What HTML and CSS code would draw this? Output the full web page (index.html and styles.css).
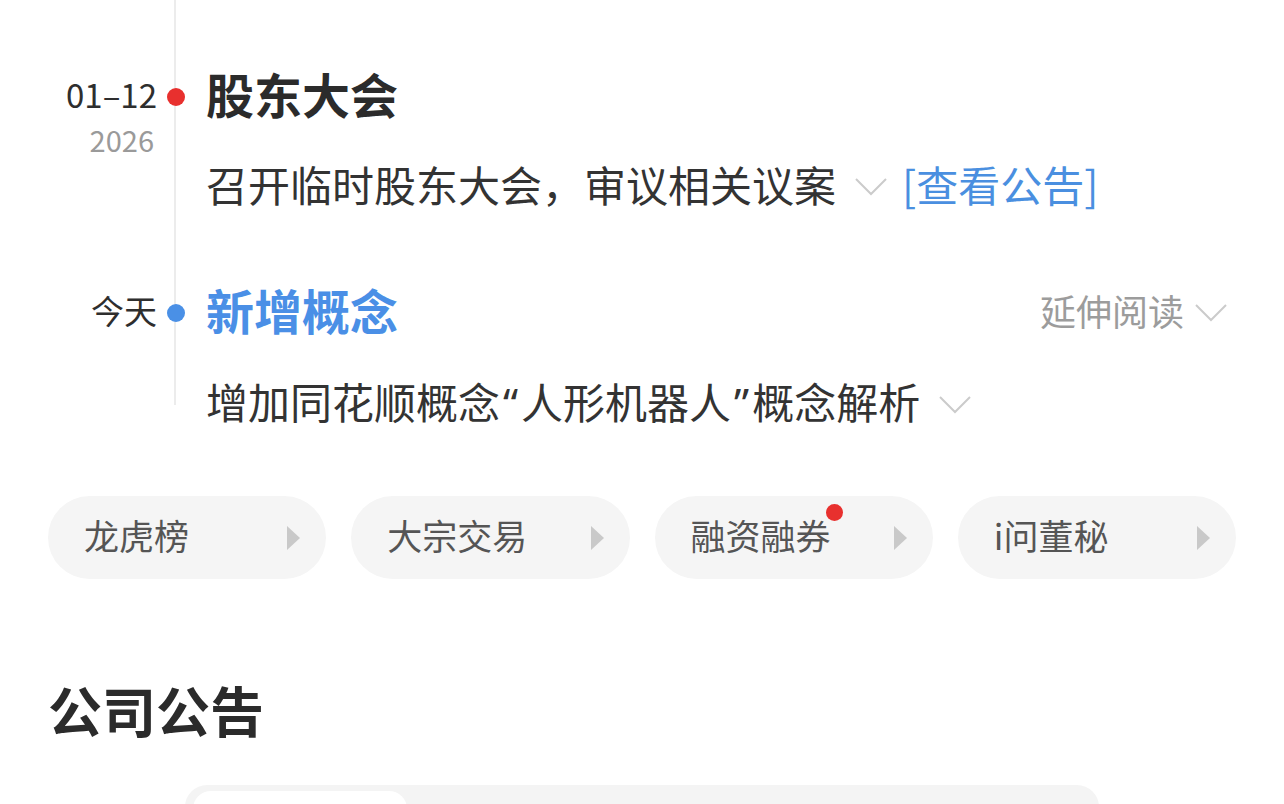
FILE: index.html
```html
<!DOCTYPE html>
<html lang="zh-CN">
<head>
<meta charset="utf-8">
<link rel="stylesheet" href="styles.css">
</head>
<body>
<div class="page">
  <section class="timeline">
    <div class="item">
      <div class="date">
        <span class="md">01–12</span>
        <span class="yr">2026</span>
      </div>
      <div class="axis"><span class="dot dot-red"></span></div>
      <div class="head"><h2 class="title">股东大会</h2></div>
      <div class="body">
        <span class="text">召开临时股东大会，审议相关议案</span>
        <svg class="chev" width="32" height="18" viewBox="0 0 32 18"><polyline points="1,1 16,16 31,1" fill="none" stroke="#cbcbcb" stroke-width="2"/></svg>
        <a class="link">[查看公告]</a>
      </div>
    </div>
    <div class="item">
      <div class="date"><span class="md">今天</span></div>
      <div class="axis"><span class="dot dot-blue"></span></div>
      <div class="head">
        <h2 class="title blue">新增概念</h2>
        <span class="more"><span class="more-text">延伸阅读</span>
          <svg class="chev" width="32" height="18" viewBox="0 0 32 18"><polyline points="1,1 16,16 31,1" fill="none" stroke="#cbcbcb" stroke-width="2"/></svg>
        </span>
      </div>
      <div class="body">
        <span class="text">增加同花顺概念<span class="q">“</span>人形机器人<span class="q">”</span>概念解析</span>
        <svg class="chev" width="32" height="18" viewBox="0 0 32 18"><polyline points="1,1 16,16 31,1" fill="none" stroke="#cbcbcb" stroke-width="2"/></svg>
      </div>
    </div>
  </section>

  <nav class="pills">
    <a class="pill"><span class="label">龙虎榜</span><span class="tri"></span></a>
    <a class="pill"><span class="label">大宗交易</span><span class="tri"></span></a>
    <a class="pill"><span class="label badge-host">融资融券<span class="badge"></span></span><span class="tri"></span></a>
    <a class="pill"><span class="label">i问董秘</span><span class="tri"></span></a>
  </nav>

  <h1 class="section-title">公司公告</h1>

  <div class="segments">
    <div class="seg active"></div>
    <div class="seg"></div>
    <div class="seg"></div>
    <div class="seg"></div>
  </div>
</div>
</body>
</html>
```

FILE: styles.css
```css
* { box-sizing: border-box; margin: 0; padding: 0; }
html, body {
  background: #ffffff;
  font-family: "Noto Sans CJK SC", "Noto Sans", sans-serif;
  color: #333333;
  overflow: hidden;
}
body { width: 1284px; height: 804px; }

.timeline {
  position: relative;
  padding-top: 65px;
}
.timeline::before {
  content: "";
  position: absolute;
  left: 174px;
  top: 0;
  bottom: 30px;
  width: 2px;
  background: #ececec;
}

.item {
  display: grid;
  grid-template-columns: 160px 30px 1fr;
  grid-template-rows: 64px 60px;
  row-gap: 28px;
  padding-right: 57px;
  padding-bottom: 64px;
}
.item:last-child { padding-bottom: 0; row-gap: 30px; }

.date {
  grid-column: 1;
  grid-row: 1 / span 2;
  display: flex;
  flex-direction: column;
  align-items: flex-end;
  padding-right: 3px;
}
.md {
  font-size: 33px;
  line-height: 58px;
  padding-bottom: 6px;
  color: #2e2e2e;
}
.yr {
  font-size: 29px;
  line-height: 26px;
  margin-top: -3px;
  color: #9a9a9a;
  padding-right: 3px;
}

.axis {
  grid-column: 2;
  grid-row: 1;
  display: flex;
  align-items: center;
  justify-content: center;
  position: relative;
  z-index: 1;
}
.dot {
  width: 18px;
  height: 18px;
  border-radius: 50%;
  margin-left: 2px;
}
.dot-red { background: #e8302e; }
.dot-blue { background: #4a90e6; }

.head {
  grid-column: 3;
  grid-row: 1;
  display: flex;
  align-items: center;
  justify-content: space-between;
  padding-left: 16px;
}
.title {
  font-size: 48px;
  font-weight: 700;
  line-height: 56px;
  padding-bottom: 8px;
  color: #2b2b2b;
}
.title.blue { color: #4a8fe6; }

.more {
  display: flex;
  align-items: center;
  gap: 11px;
  font-size: 36px;
  color: #9c9c9c;
}
.more-text {
  line-height: 44px;
  padding-bottom: 6px;
}

.body {
  grid-column: 3;
  grid-row: 2;
  display: flex;
  align-items: center;
  padding-left: 16px;
  font-size: 42px;
}
.body .text, .link {
  line-height: 54px;
  padding-bottom: 6px;
}
.body .text { color: #333333; }
.q {
  font-family: "Noto Sans", "Liberation Sans", sans-serif;
  margin: 0 3px;
}
.body .chev { margin-left: 19px; }
.link {
  margin-left: 15px;
  color: #4a8fe0;
}

.pills {
  display: flex;
  gap: 25px;
  padding: 0 48px;
  margin-top: 61px;
}
.pill {
  flex: 1;
  height: 83px;
  border-radius: 42px;
  background: #f5f5f5;
  display: flex;
  align-items: center;
  justify-content: space-between;
  padding: 0 26px 0 36px;
}
.label {
  font-size: 35px;
  line-height: 44px;
  padding-bottom: 6px;
  color: #555555;
}
.badge-host { position: relative; }
.badge {
  position: absolute;
  right: -12px;
  top: -9px;
  width: 17px;
  height: 17px;
  border-radius: 50%;
  background: #e8302e;
}
.tri {
  width: 0;
  height: 0;
  border-top: 12px solid transparent;
  border-bottom: 12px solid transparent;
  border-left: 13px solid #c9c9c9;
}

.section-title {
  font-size: 54px;
  font-weight: 700;
  line-height: 64px;
  padding-bottom: 6px;
  color: #2b2b2b;
  padding-left: 48px;
  margin-top: 99px;
}

.segments {
  width: 914px;
  margin: 37px auto 0;
  height: 80px;
  border-radius: 22px;
  background: #f4f4f4;
  display: flex;
  gap: 8px;
  padding: 6px 8px;
}
.seg { flex: 1; }
.seg.active {
  flex: 0 0 214px;
  background: #ffffff;
  border-radius: 18px;
}
```
